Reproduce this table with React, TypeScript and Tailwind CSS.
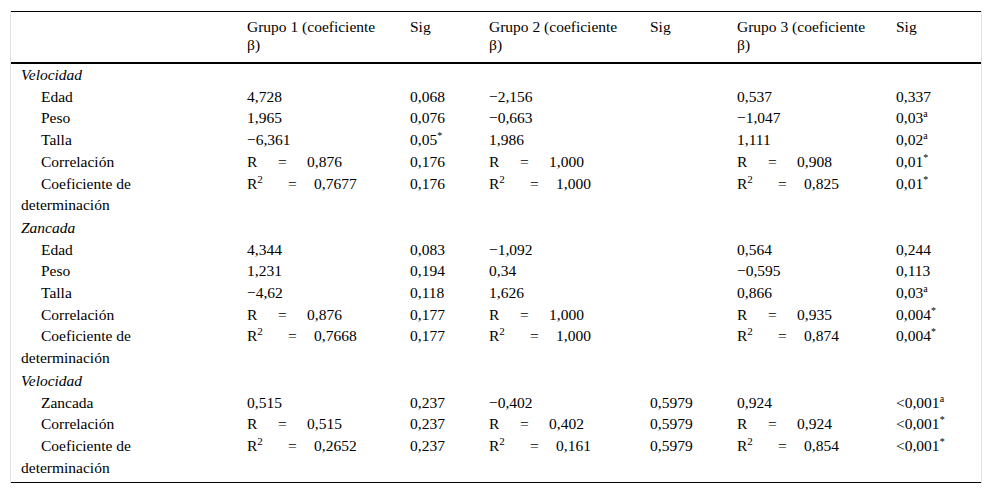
import React from "react";

type Cell = React.ReactNode;

const COLS = "grid grid-cols-[226px_163px_79px_161px_87px_159px_94px]";

function Sup({ c }: { c: string }) {
  return <span className="text-[10px] relative top-[-6px] leading-none">{c}</span>;
}

function R({ v }: { v: string }) {
  return (
    <span className="inline-flex whitespace-nowrap">
      <span className="inline-block w-[31px]">R</span>
      <span className="inline-block w-[29px]">=</span>
      <span>{v}</span>
    </span>
  );
}

function R2({ v }: { v: string }) {
  return (
    <span className="inline-flex whitespace-nowrap">
      <span className="inline-block w-[41px]">
        R<span className="text-[11px] relative top-[-6px] leading-none">2</span>
      </span>
      <span className="inline-block w-[26px]">=</span>
      <span>{v}</span>
    </span>
  );
}

function Row({ label, cells, indent = true, wrap }: { label: Cell; cells: Cell[]; indent?: boolean; wrap?: string }) {
  return (
    <div className={COLS}>
      <div className="pl-[10px]">
        {indent ? (
          <>
            <div className="pl-[20px]">{label}</div>
            {wrap && <div>{wrap}</div>}
          </>
        ) : (
          <div className="italic">{label}</div>
        )}
      </div>
      {cells.map((c, i) => (
        <div key={i} className="pl-[10px] whitespace-nowrap">
          {c}
        </div>
      ))}
    </div>
  );
}

function Section({ title }: { title: string }) {
  return <Row label={title} indent={false} cells={["", "", "", "", "", ""]} />;
}

export default function App() {
  return (
    <div className="w-[992px] h-[497px] bg-white pt-[11px] text-black font-['Liberation_Serif','Times_New_Roman',serif]">
      <div className="ml-[10px] w-[972px] border-l border-r border-l-[#e3e3e3] border-r-[#e3e3e3] text-[15.5px]">
        <div className="border-t border-black" />
        <div className={`${COLS} leading-[18px] pt-[6px] pb-[8px]`}>
          <div />
          <div className="pl-[10px]">Grupo 1 (coeficiente<br />β)</div>
          <div className="pl-[10px]">Sig</div>
          <div className="pl-[10px]">Grupo 2 (coeficiente<br />β)</div>
          <div className="pl-[10px]">Sig</div>
          <div className="pl-[10px]">Grupo 3 (coeficiente<br />β)</div>
          <div className="pl-[10px]">Sig</div>
        </div>
        <div className="border-t-2 border-black" />
        <div className="leading-[21.7px]">
          <Section title="Velocidad" />
          <Row label="Edad" cells={["4,728", "0,068", "−2,156", "", "0,537", "0,337"]} />
          <Row label="Peso" cells={["1,965", "0,076", "−0,663", "", "−1,047", <>0,03<Sup c="a" /></>]} />
          <Row label="Talla" cells={["−6,361", <>0,05<Sup c="*" /></>, "1,986", "", "1,111", <>0,02<Sup c="a" /></>]} />
          <Row label="Correlación" cells={[<R v="0,876" />, "0,176", <R v="1,000" />, "", <R v="0,908" />, <>0,01<Sup c="*" /></>]} />
          <Row label="Coeficiente de" wrap="determinación" cells={[<R2 v="0,7677" />, "0,176", <R2 v="1,000" />, "", <R2 v="0,825" />, <>0,01<Sup c="*" /></>]} />
          <div className="h-[1px]" />
          <Section title="Zancada" />
          <Row label="Edad" cells={["4,344", "0,083", "−1,092", "", "0,564", "0,244"]} />
          <Row label="Peso" cells={["1,231", "0,194", "0,34", "", "−0,595", "0,113"]} />
          <Row label="Talla" cells={["−4,62", "0,118", "1,626", "", "0,866", <>0,03<Sup c="a" /></>]} />
          <Row label="Correlación" cells={[<R v="0,876" />, "0,177", <R v="1,000" />, "", <R v="0,935" />, <>0,004<Sup c="*" /></>]} />
          <Row label="Coeficiente de" wrap="determinación" cells={[<R2 v="0,7668" />, "0,177", <R2 v="1,000" />, "", <R2 v="0,874" />, <>0,004<Sup c="*" /></>]} />
          <div className="h-[1px]" />
          <Section title="Velocidad" />
          <Row label="Zancada" cells={["0,515", "0,237", "−0,402", "0,5979", "0,924", <>&lt;0,001<Sup c="a" /></>]} />
          <Row label="Correlación" cells={[<R v="0,515" />, "0,237", <R v="0,402" />, "0,5979", <R v="0,924" />, <>&lt;0,001<Sup c="*" /></>]} />
          <Row label="Coeficiente de" wrap="determinación" cells={[<R2 v="0,2652" />, "0,237", <R2 v="0,161" />, "0,5979", <R2 v="0,854" />, <>&lt;0,001<Sup c="*" /></>]} />
          <div className="h-[4px]" />
        </div>
        <div className="border-t border-black" />
      </div>
    </div>
  );
}
